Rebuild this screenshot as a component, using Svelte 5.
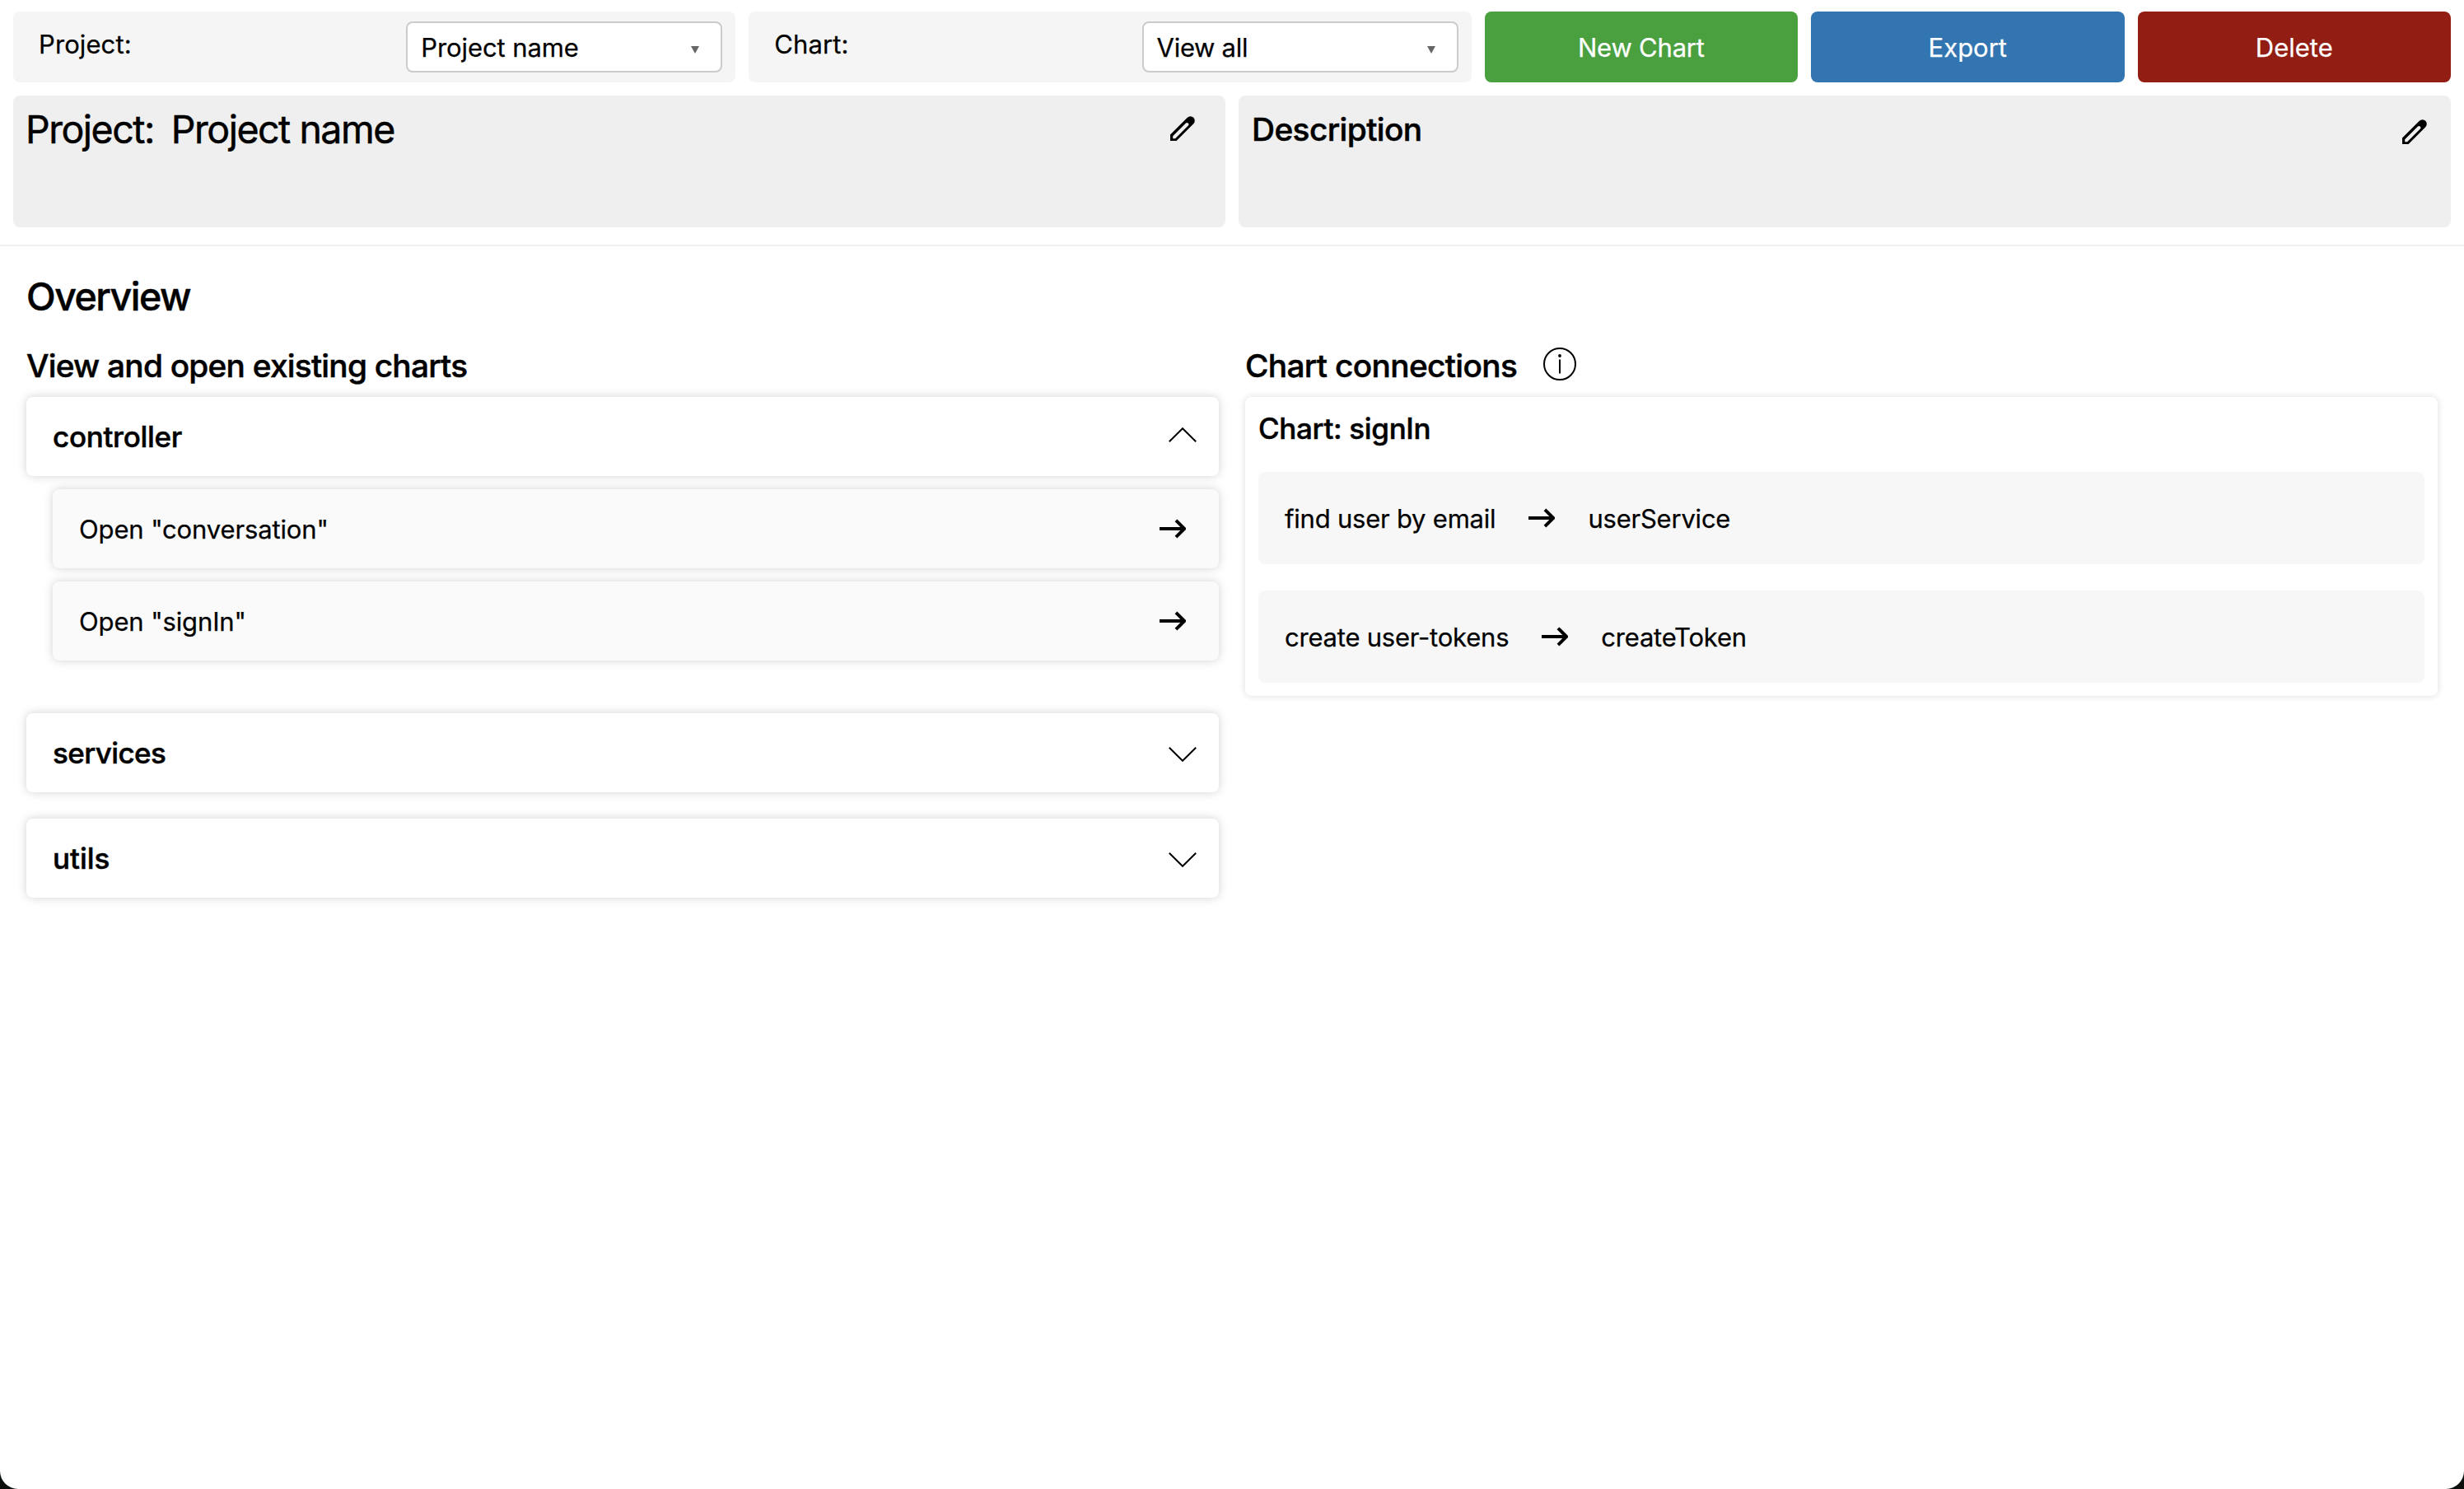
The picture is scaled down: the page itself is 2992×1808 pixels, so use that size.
<script lang="ts">
    let folders = $state([
        { name: 'controller', open: true, charts: ['conversation', 'signIn'] },
        { name: 'services', open: false, charts: ['userService'] },
        { name: 'utils', open: false, charts: ['createToken'] }
    ]);

    const connections = [
        {
            chart: 'signIn',
            links: [
                { from: 'find user by email', to: 'userService' },
                { from: 'create user-tokens', to: 'createToken' }
            ]
        }
    ];

    function toggle(i: number) {
        folders[i].open = !folders[i].open;
    }
</script>

{#snippet arrow()}
    <svg class="arrow" viewBox="0 0 32 24" width="32" height="24">
        <path d="M0 12H29M20 1.8L30.2 12L20 22.2" />
    </svg>
{/snippet}

{#snippet pencil()}
    <svg class="pencil" viewBox="0 0 30 30" width="30" height="30">
        <path
            fill-rule="evenodd"
            d="M0 30V22.6L20.8 1.8A5.4 5.4 0 0 1 28.3 1.8A5.4 5.4 0 0 1 28.3 9.2L7.6 30ZM3.2 27.2H6.1L21.8 11.5A1.8 1.8 0 0 0 19 8.6L3.2 24.3Z"
        />
    </svg>
{/snippet}

<div class="page">
    <header>
        <div class="toolbar">
            <div class="group">
                <span class="label">Project:</span>
                <button class="select">
                    <span>Project name</span>
                    <svg class="caret" viewBox="0 0 10 9" width="10" height="9"><path d="M0 0H10L5 9Z" /></svg>
                </button>
            </div>
            <div class="group">
                <span class="label">Chart:</span>
                <button class="select">
                    <span class="tight">View all</span>
                    <svg class="caret" viewBox="0 0 10 9" width="10" height="9"><path d="M0 0H10L5 9Z" /></svg>
                </button>
            </div>
            <button class="action new">New Chart</button>
            <button class="action export">Export</button>
            <button class="action delete">Delete</button>
        </div>
        <div class="panels">
            <div class="panel">
                <p class="title"><span>Project:</span><span>Project name</span></p>
                <button class="edit" aria-label="Edit name">{@render pencil()}</button>
            </div>
            <div class="panel">
                <h3>Description</h3>
                <button class="edit low" aria-label="Edit description">{@render pencil()}</button>
            </div>
        </div>
    </header>

    <main>
        <h1>Overview</h1>
        <div class="columns">
            <section>
                <h2 class="existing">View and open existing charts</h2>
                {#each folders as folder, i}
                    <div class="folder">
                        <button class="card" onclick={() => toggle(i)}>
                            <span class={folder.name}>{folder.name}</span>
                            <svg class={['chevron', { up: folder.open }]} viewBox="0 0 34 18" width="34" height="18">
                                <path d="M0.8 0.8L17 16.8L33.2 0.8" />
                            </svg>
                        </button>
                        {#if folder.open}
                            <div class="charts">
                                {#each folder.charts as chart}
                                    <button class="card chart">
                                        <span>Open "{chart}"</span>
                                        {@render arrow()}
                                    </button>
                                {/each}
                            </div>
                        {/if}
                    </div>
                {/each}
            </section>
            <section>
                <h2>
                    Chart connections
                    <svg class="info" viewBox="0 0 40 40" width="40" height="40">
                        <circle cx="20" cy="20" r="19" />
                        <path d="M20 14.5V31.5" />
                        <circle class="dot" cx="20" cy="10" r="1.9" />
                    </svg>
                </h2>
                {#each connections as c}
                    <div class="connections">
                        <h4>Chart: {c.chart}</h4>
                        {#each c.links as link}
                            <div class="link">
                                <span>{link.from}</span>
                                {@render arrow()}
                                <span>{link.to}</span>
                            </div>
                        {/each}
                    </div>
                {/each}
            </section>
        </div>
    </main>
</div>

<style>
    :global(body) {
        background: #0b100d;
    }

    .page {
        min-height: 1808px;
        background: white;
        border-radius: 0 0 22px 22px;
        font-family: Inter, sans-serif;
        font-size: 31px;
        color: black;
        -webkit-text-stroke: 0.25px;
    }

    button {
        font: inherit;
        color: inherit;
        border: none;
        padding: 0;
        margin: 0;
        cursor: pointer;
    }

    h1,
    h2,
    h3,
    h4,
    p {
        margin: 0;
        font-weight: 500;
        -webkit-text-stroke: 0.5px;
    }

    svg {
        display: block;
        flex: none;
    }

    header {
        padding: 14px 16px 21px;
        border-bottom: 2px solid #efefef;
    }

    .toolbar {
        display: grid;
        grid-template-columns: 877.3fr 877.3fr 380.47fr 380.47fr 380.47fr;
        gap: 16px;
        height: 86px;
    }

    .group {
        display: flex;
        justify-content: space-between;
        align-items: flex-start;
        box-sizing: border-box;
        padding: 12px 16px 12px 31px;
        background: #f5f5f5;
        border-radius: 8px;
    }

    .label {
        margin-top: 5px;
        line-height: 46px;
        letter-spacing: 0.1px;
    }

    .select {
        display: flex;
        justify-content: space-between;
        align-items: center;
        box-sizing: border-box;
        width: 384px;
        height: 62px;
        padding: 0 26px 0 16px;
        background: white;
        border: 2px solid #cbcbcb;
        border-radius: 8px;
        letter-spacing: -0.1px;
    }

    .tight {
        letter-spacing: -0.3px;
    }

    .caret {
        margin-top: 6px;
        fill: #666;
    }

    .action {
        color: white;
        border-radius: 8px;
    }

    .new {
        background: #4aa03f;
        letter-spacing: -0.2px;
    }

    .export {
        background: #3375b1;
    }

    .delete {
        background: #921d12;
    }

    .panels {
        display: grid;
        grid-template-columns: 1fr 1fr;
        gap: 16px;
        margin-top: 16px;
    }

    .panel {
        display: flex;
        justify-content: space-between;
        align-items: flex-start;
        box-sizing: border-box;
        height: 160px;
        padding: 12px 37px 0 15px;
        background: #efefef;
        border-radius: 8px;
    }

    .title {
        display: flex;
        gap: 21px;
        margin-top: 1px;
        font-size: 46.5px;
        font-weight: 400;
        line-height: 57px;
        letter-spacing: -1.5px;
    }

    h3 {
        padding-left: 1px;
        font-size: 38.8px;
        line-height: 57px;
        letter-spacing: -0.6px;
    }

    .edit {
        margin-top: 13px;
        background: none;
    }

    .low {
        margin: 17px -8px 0 0;
    }

    main {
        padding: 33px 32px 32px;
    }

    h1 {
        font-size: 46.5px;
        line-height: 57px;
        letter-spacing: -1.5px;
        margin-bottom: 32px;
    }

    .columns {
        display: grid;
        grid-template-columns: 1fr 1fr;
        gap: 32px;
        align-items: start;
    }

    h2 {
        display: flex;
        align-items: center;
        gap: 32px;
        height: 45px;
        margin-bottom: 16px;
        font-size: 38.8px;
        line-height: 45px;
        letter-spacing: -0.66px;
    }

    .existing {
        letter-spacing: -0.77px;
    }

    .info {
        margin-top: -3px;
        fill: none;
        stroke: black;
        stroke-width: 2;
    }

    .dot {
        fill: black;
        stroke: none;
    }

    .folder {
        margin-bottom: 32px;
    }

    .card {
        display: flex;
        justify-content: space-between;
        align-items: center;
        box-sizing: border-box;
        width: 100%;
        height: 96px;
        padding: 0 27px 0 32px;
        background: white;
        border-radius: 8px;
        box-shadow: 0 0 12px rgba(0, 0, 0, 0.18);
        font-size: 35px;
        font-weight: 500;
        letter-spacing: -0.3px;
        -webkit-text-stroke: 0.5px;
    }

    .services {
        letter-spacing: -0.6px;
    }

    .utils {
        letter-spacing: 0;
    }

    .chevron {
        margin-top: 4px;
        fill: none;
        stroke: black;
        stroke-width: 2;
    }

    .chevron.up {
        margin-top: -5px;
        transform: scaleY(-1);
    }

    .charts {
        display: flex;
        flex-direction: column;
        gap: 16px;
        padding: 16px 0 16px 32px;
        margin-bottom: 48px;
    }

    .chart {
        padding: 0 40px 0 32px;
        background: #fafafa;
        font-size: 31px;
        font-weight: 400;
        letter-spacing: -0.13px;
        -webkit-text-stroke: 0.25px;
    }

    .arrow {
        fill: none;
        stroke: black;
        stroke-width: 4;
    }

    .pencil {
        fill: black;
    }

    .connections {
        display: flex;
        flex-direction: column;
        gap: 32px;
        box-sizing: border-box;
        height: 363px;
        padding: 16px;
        border-radius: 8px;
        box-shadow: 0 0 8px rgba(0, 0, 0, 0.14);
    }

    h4 {
        height: 43px;
        font-size: 35px;
        line-height: 44px;
        letter-spacing: -0.33px;
    }

    .link {
        display: flex;
        align-items: center;
        gap: 40px;
        height: 112px;
        padding: 0 32px;
        background: #f7f7f7;
        border-radius: 8px;
        letter-spacing: -0.22px;
    }
</style>
